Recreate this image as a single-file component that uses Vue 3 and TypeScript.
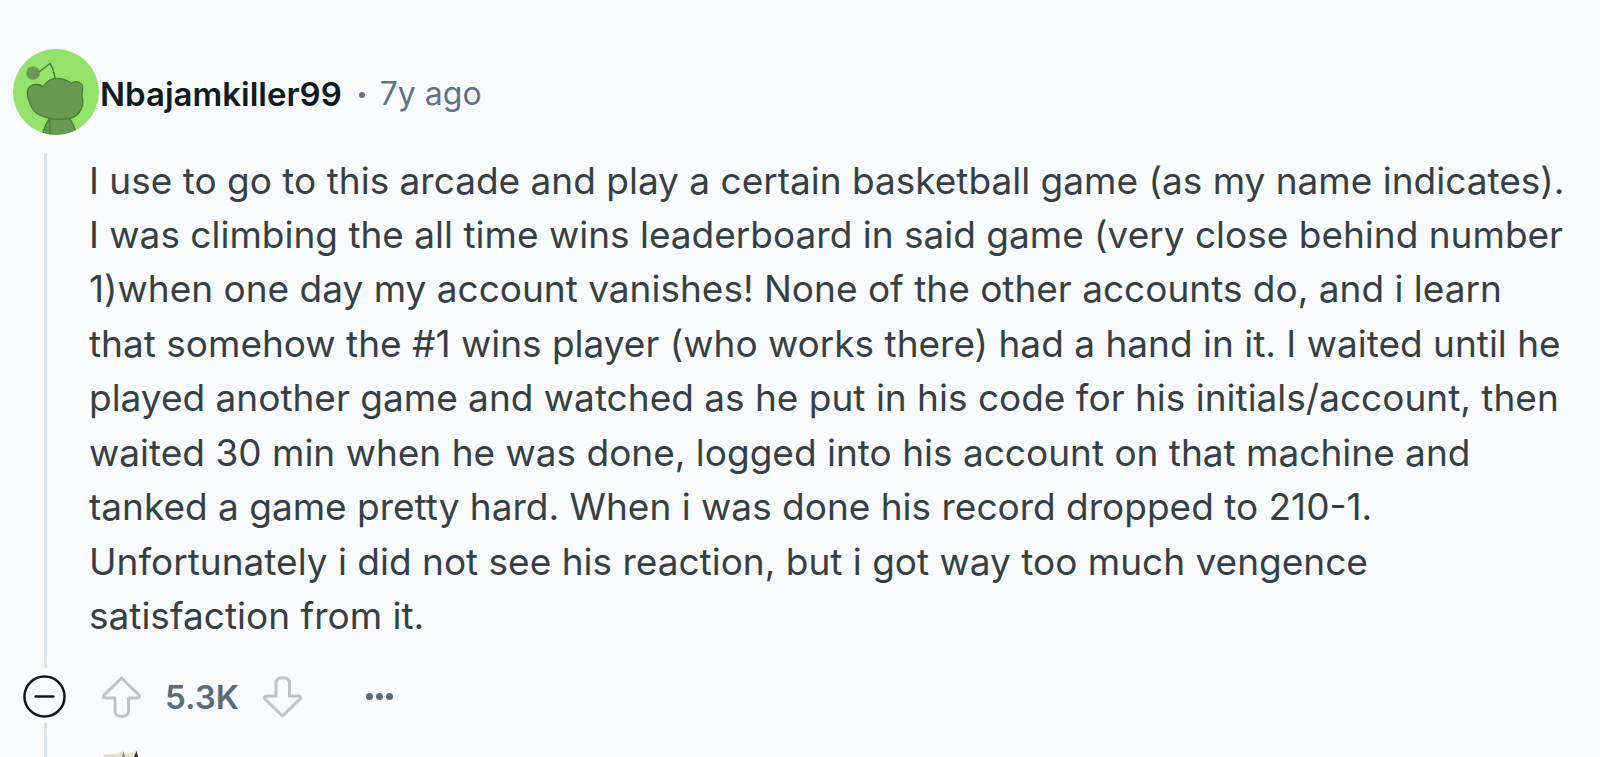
<script setup lang="ts">
const lines: string[] = [
  'I use to go to this arcade and play a certain basketball game (as my name indicates).',
  'I was climbing the all time wins leaderboard in said game (very close behind number',
  '1)when one day my account vanishes! None of the other accounts do, and i learn',
  'that somehow the #1 wins player (who works there) had a hand in it. I waited until he',
  'played another game and watched as he put in his code for his initials/account, then',
  'waited 30 min when he was done, logged into his account on that machine and',
  'tanked a game pretty hard. When i was done his record dropped to 210-1.',
  'Unfortunately i did not see his reaction, but i got way too much vengence',
  'satisfaction from it.'
]
</script>

<template>
  <main class="page">
    <header class="head">
      <svg class="avatar" viewBox="0 0 86 86" aria-hidden="true">
        <defs>
          <clipPath id="disc"><circle cx="43" cy="43" r="43" /></clipPath>
        </defs>
        <circle cx="43" cy="43" r="43" fill="#94e26c" />
        <g clip-path="url(#disc)" stroke="#47802f" stroke-width="1.3">
          <path d="M29 90 C30 80 33 74 37 69 L56 69 C60 74 63 81 65 90 Z" fill="#699a52" />
          <path d="M37 70 C36 76 37 82 38 90" fill="none" />
          <path d="M14.3 44 C14 39 18 35 24 35.5 C26.5 35.5 29 36.5 30.3 37.7 C34 32 38 29.3 43 29.3 C49 29.3 54.5 31 58.7 34.3 C60 32.5 62 32.5 64.3 32.7 C67.5 33.3 70 36 69.7 39.5 C69.7 42 69 44.5 68.7 46 C69.7 49 70 53 69.7 56 C68 62 65 66 60.3 68.3 C55 70 49 70.5 43.7 70.3 C36 70 29 68 23.7 64.3 C20 61 18 58 17 54.3 C15.5 51 14.3 48 14.3 44 Z" fill="#699a52" />
        </g>
        <circle cx="20" cy="24" r="6.8" fill="#699a52" />
        <path d="M26 23 L37 14.5 C39.5 18 41 23 42 29" fill="none" stroke="#47802f" stroke-width="1.5" />
      </svg>
      <strong class="name">Nbajamkiller99</strong>
      <span class="dot"></span>
      <span class="age">7y ago</span>
    </header>

    <section class="thread">
      <div class="body">
        <p v-for="line in lines" :key="line" class="line">{{ line }}</p>
      </div>
    </section>

    <footer class="actions">
      <svg class="collapse" viewBox="0 0 44 44" aria-hidden="true">
        <circle cx="22" cy="22" r="20.5" fill="none" stroke="#0f1a1c" stroke-width="2.6" />
        <path d="M13 22 H31" stroke="#0f1a1c" stroke-width="2.6" stroke-linecap="round" />
      </svg>
      <svg class="vote up" viewBox="0 0 39 42" aria-hidden="true">
        <path d="M19.5 2 L37 19 C38 20.5 37.5 22 35.5 22 L26.5 22 L26.5 35.5 C26.5 42 13 42 13 35.5 L13 22 L3.5 22 C1.5 22 1 20.5 2 19 Z" fill="none" stroke="#bfc1c3" stroke-width="3" stroke-linejoin="round" />
      </svg>
      <span class="score">5.3K</span>
      <svg class="vote down" viewBox="0 0 39 42" aria-hidden="true">
        <path d="M19.5 40 L37 23 C38 21.5 37.5 20 35.5 20 L26.5 20 L26.5 6.5 C26.5 0 13 0 13 6.5 L13 20 L3.5 20 C1.5 20 1 21.5 2 23 Z" fill="none" stroke="#bfc1c3" stroke-width="3" stroke-linejoin="round" />
      </svg>
      <span class="more"><i></i><i></i><i></i></span>
    </footer>
    <div class="rail-end"></div>
    <svg class="next-avatar" viewBox="0 0 36 7" aria-hidden="true">
      <path d="M0 7 L2 4.5 L14 4 L20 1 L22 4 L30 3 L34 0 L35 7 Z" fill="#e6e0cf" />
      <path d="M19 7 L20.5 1.5 L22 7 Z" fill="#8b8468" />
      <path d="M31 7 L33.5 1 L35 7 Z" fill="#2a2c2c" />
    </svg>
  </main>
</template>

<style>
html, body { margin: 0; background: #f9fafc; }
</style>

<style scoped>
.page {
  position: relative;
  width: 1600px;
  height: 757px;
  overflow: hidden;
  background: #f9fafc;
  font-family: Inter, "Liberation Sans", sans-serif;
  box-sizing: border-box;
  padding: 49px 0 0 13px;
}
.head {
  display: flex;
  align-items: center;
  height: 86px;
}
.avatar { width: 86px; height: 86px; flex: none; }
.name {
  font-size: 33px;
  font-weight: 600;
  color: #0f1a1c;
  margin: 3px 0 0 1px;
}
.dot {
  width: 6px;
  height: 6px;
  border-radius: 50%;
  background: #5f7488;
  margin: 6px 15px 0 17px;
}
.age {
  font-size: 32px;
  color: #5f7488;
  margin-top: 3px;
}
.thread {
  margin: 18px 0 0 31px;
  border-left: 3px solid #dbe5ee;
  padding: 0.5px 0 0 42px;
  height: 515px;
  box-sizing: border-box;
}
.line {
  margin: 0;
  font-size: 37px;
  line-height: 54.45px;
  color: #363f44;
  white-space: nowrap;
}
.actions {
  display: flex;
  align-items: center;
  height: 43px;
  margin: 7px 0 0 10px;
}
.collapse { width: 43px; height: 43px; display: block; flex: none; }
.vote { width: 39px; height: 42px; flex: none; }
.up { margin-left: 36px; }
.score {
  font-size: 33px;
  font-weight: 600;
  color: #5c6b78;
  margin: 0 24px 0 24px;
}
.more { display: flex; gap: 3px; margin-left: 64px; }
.more i { width: 7px; height: 7px; border-radius: 50%; background: #5c6b78; }
.rail-end {
  width: 3px;
  height: 40px;
  margin: 5px 0 0 31px;
  background: #dbe5ee;
}
.next-avatar {
  position: absolute;
  left: 103px;
  top: 750px;
  width: 36px;
  height: 7px;
}
</style>
